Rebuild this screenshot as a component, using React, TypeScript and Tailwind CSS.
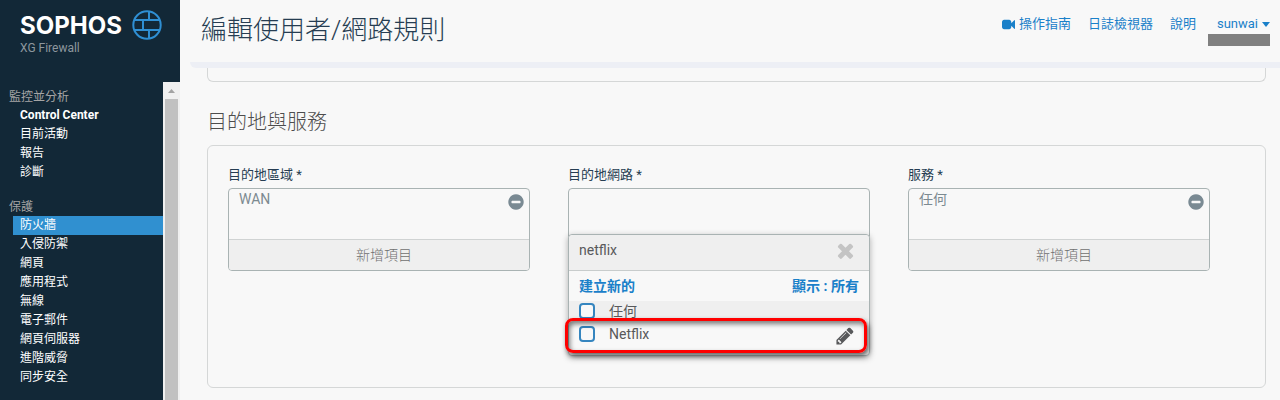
import { useState } from 'react';

interface NavGroup {
  title: string;
  items: string[];
}

const navGroups: NavGroup[] = [
  { title: '監控並分析', items: ['Control Center', '目前活動', '報告', '診斷'] },
  {
    title: '保護',
    items: ['防火牆', '入侵防禦', '網頁', '應用程式', '無線', '電子郵件', '網頁伺服器', '進階威脅', '同步安全'],
  },
];

const iconPaths = {
  video:
    'M1792 352v1088q0 42-39 59-13 5-25 5-27 0-45-19l-403-403v166q0 119-84.5 203.5t-203.5 84.5h-704q-119 0-203.5-84.5t-84.5-203.5v-704q0-119 84.5-203.5t203.5-84.5h704q119 0 203.5 84.5t84.5 203.5v165l403-402q18-19 45-19 12 0 25 5 39 17 39 59z',
  minus:
    'M1344 960v-128q0-26-19-45t-45-19h-768q-26 0-45 19t-19 45v128q0 26 19 45t45 19h768q26 0 45-19t19-45zm320-64q0 209-103 385.5t-279.5 279.5-385.5 103-385.5-103-279.5-279.5-103-385.5 103-385.5 279.5-279.5 385.5-103 385.5 103 279.5 279.5 103 385.5z',
  times:
    'M1490 1322q0 40-28 68l-136 136q-28 28-68 28t-68-28l-294-294-294 294q-28 28-68 28t-68-28l-136-136q-28-28-28-68t28-68l294-294-294-294q-28-28-28-68t28-68l136-136q28-28 68-28t68 28l294 294 294-294q28-28 68-28t68 28l136 136q28 28 28 68t-28 68l-294 294 294 294q28 28 28 68z',
  pencil:
    'M491 1536l91-91-235-235-91 91v107h128v128h107zm523-928q0-22-22-22-10 0-17 7l-542 542q-7 7-7 17 0 22 22 22 10 0 17-7l542-542q7-7 7-17zm-54-192l416 416-832 832h-416v-416zm683 96q0 53-37 90l-166 166-416-416 166-165q36-38 90-38 53 0 91 38l235 234q37 39 37 91z',
};

function Icon({ name, className }: { name: keyof typeof iconPaths; className: string }) {
  return (
    <svg viewBox="0 0 1792 1792" fill="currentColor" className={className} aria-hidden="true">
      <path d={iconPaths[name]} />
    </svg>
  );
}

function Sidebar() {
  return (
    <aside className="w-[180px] shrink-0 flex flex-col bg-[#122837]">
      {/* Logo */}
      <div className="h-[82px] shrink-0 pl-5 pt-2.5">
        <div className="flex items-start gap-2.5">
          <span className="font-['Inter',sans-serif] text-2xl leading-8 font-bold text-white">SOPHOS</span>
          <svg viewBox="0 0 30 30" className="w-[30px] h-[30px]" fill="none" stroke="#2f8fd3" strokeWidth="2">
            <circle cx="15" cy="15" r="13.7" />
            <path d="M3 10h24M3 20h24M17 1.5V10M11 10v10M17 20v8.5" />
          </svg>
        </div>
        <div className="text-xs leading-3 text-[#8d979e]">XG Firewall</div>
      </div>

      <div className="flex flex-1">
        <nav className="flex-1 flex flex-col gap-4 pt-1.5 pb-4 text-xs">
          {navGroups.map((group) => (
            <div key={group.title}>
              <h3 className="pl-[9px] leading-[18px] text-[#a5a5a5]">{group.title}</h3>
              <ul className="pl-[13px]">
                {group.items.map((item) => (
                  <li key={item}>
                    <a
                      href="#"
                      className={`block pl-[7px] leading-[19px] text-white ${
                        item === '防火牆' ? 'bg-[#3090d0]' : ''
                      } ${item === 'Control Center' ? 'font-bold' : ''}`}
                    >
                      {item}
                    </a>
                  </li>
                ))}
              </ul>
            </div>
          ))}
        </nav>
        {/* Scrollbar track */}
        <div className="w-[17px] flex flex-col items-center bg-[#f0f0f0]">
          <svg viewBox="0 0 17 17" className="w-[17px] h-[17px]" fill="#a3a3a3">
            <path d="M5 11h7L8.5 7z" />
          </svg>
          <div className="w-[13px] flex-1 bg-[#c1c1c1]" />
        </div>
      </div>
    </aside>
  );
}

function Header() {
  return (
    <header className="h-[62px] flex justify-between pl-[21px] pr-2.5">
      <h1 className="pt-3 text-[26px] leading-9 font-light text-[#263d52]">編輯使用者/網路規則</h1>
      <nav className="flex items-start gap-4 pt-3.5 text-[13px] leading-5 text-[#1a80c9]">
        <div className="flex items-start gap-[17px]">
          <a href="#" className="flex items-center gap-1">
            <Icon name="video" className="w-[13px] h-[13px]" />
            操作指南
          </a>
          <a href="#">日誌檢視器</a>
          <a href="#">說明</a>
        </div>
        <div className="-ml-1 flex flex-col">
          <button type="button" className="flex items-center justify-end gap-1">
            sunwai
            <svg viewBox="0 0 8 5" className="w-2 h-[5px]" fill="currentColor">
              <path d="M0 0h8L4 5z" />
            </svg>
          </button>
          <div className="w-[62px] h-3 bg-[#808080]" />
        </div>
      </nav>
    </header>
  );
}

function ItemBox({ id, label, value }: { id: string; label: string; value: string }) {
  return (
    <div>
      <h3 id={id} className="text-[13px] leading-5 text-[#263d52]">{label} *</h3>
      <div
        role="group"
        aria-labelledby={id}
        className="mt-[3px] rounded border border-[#a9b3b3] overflow-hidden text-sm text-[#7c8a91]"
      >
        <div className="h-[50px] flex justify-between pl-2.5 pr-1">
          <span className="leading-5">{value}</span>
          <button type="button" aria-label={`移除 ${value}`} className="self-start pt-1">
            <Icon name="minus" className="w-[18px] h-[18px] text-[#7a8a93]" />
          </button>
        </div>
        <button
          type="button"
          className="block w-full h-[31px] pl-2.5 border-t border-[#d0d3d3] bg-[#efefef] font-light text-[#707070]"
        >
          新增項目
        </button>
      </div>
    </div>
  );
}

function NetworkPicker() {
  const [query, setQuery] = useState('netflix');
  const boxClass = 'appearance-none w-4 h-4 rounded border-2 border-[#3585bf] bg-[#f8f8f8] checked:bg-[#3585bf]';

  return (
    <div className="relative">
      <h3 id="dest-network" className="text-[13px] leading-5 text-[#263d52]">目的地網路 *</h3>
      <div className="mt-[3px] h-[52px] rounded border border-[#a9b3b3]" />

      {/* Dropdown */}
      <div
        role="group"
        aria-labelledby="dest-network"
        className="absolute inset-x-0 top-[69px] rounded border border-[#a9b3b3] bg-[#f8f8f8] text-sm text-[#58595b] shadow-[0_2px_6px_rgba(0,0,0,0.3)]"
      >
        <div className="h-9 flex items-start rounded-t border-b border-[#c8cccc] bg-[#efefef] pl-2.5 pr-3">
          <input
            type="text"
            aria-label="搜尋"
            value={query}
            onChange={(e) => setQuery(e.target.value)}
            className="flex-1 min-w-0 h-[30px] outline-none"
          />
          <button type="button" aria-label="清除" onClick={() => setQuery('')} className="pt-1 text-[#c4c4c4]">
            <Icon name="times" className="w-[23px] h-[23px]" />
          </button>
        </div>
        <div className="h-[30px] flex items-center justify-between px-2.5 font-bold text-[#1a80c9]">
          <a href="#">建立新的</a>
          <a href="#">顯示 : 所有</a>
        </div>
        <label className="h-[19px] flex items-center gap-3.5 pl-2.5 bg-[#efefef]">
          <input type="checkbox" className={boxClass} />
          任何
        </label>
        <div className="h-[35px] flex items-start justify-between pl-2.5 pr-3.5 pt-1">
          <label className="flex items-center gap-3.5">
            <input type="checkbox" className={boxClass} />
            Netflix
          </label>
          <button type="button" aria-label="編輯" className="pt-0.5">
            <Icon name="pencil" className="w-5 h-5" />
          </button>
        </div>
        {/* Highlight around the matching row */}
        <div className="absolute -left-1 right-0.5 bottom-0.5 h-[35px] rounded-lg border-3 border-[#ff0000] pointer-events-none shadow-[2px_3px_5px_rgba(0,0,0,0.6),inset_2px_3px_5px_rgba(0,0,0,0.5)]" />
      </div>
    </div>
  );
}

export default function App() {
  return (
    <div className="h-screen overflow-hidden flex bg-[#f8f8f8] font-['Roboto','Noto_Sans_CJK_TC',sans-serif]">
      <Sidebar />
      <div className="flex-1 min-w-0 flex flex-col">
        <Header />
        <div className="ml-2.5 h-1.5 shrink-0 rounded-bl-lg bg-[#edeff5]" />
        <main className="pl-[27px] pr-3.5">
          <div className="h-3.5 rounded-b-md border border-t-0 border-[#d5d7d7]" />
          <h2 className="mt-6 text-xl leading-8 font-light text-[#4d4d4d]">目的地與服務</h2>
          <section className="mt-[7px] min-h-[243px] grid grid-cols-3 items-start gap-[38px] rounded-md border border-[#d5d7d7] pl-5 pr-[55px] pt-[19px]">
            <ItemBox id="dest-zone" label="目的地區域" value="WAN" />
            <NetworkPicker />
            <ItemBox id="services" label="服務" value="任何" />
          </section>
        </main>
      </div>
    </div>
  );
}
